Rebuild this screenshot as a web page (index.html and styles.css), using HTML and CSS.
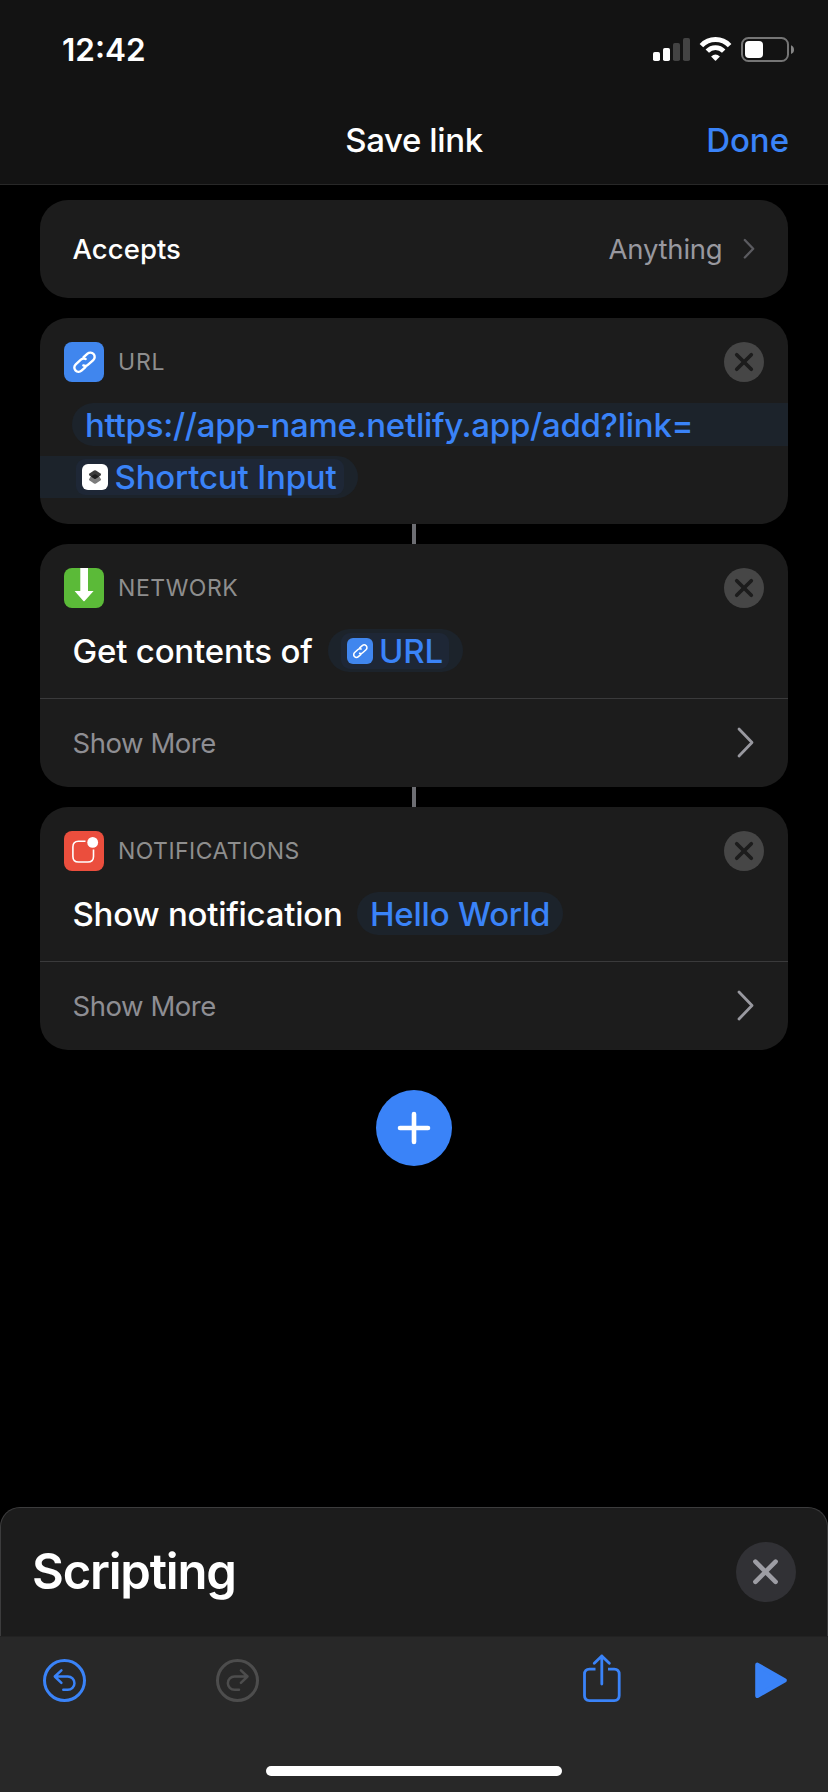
FILE: index.html
```
<!DOCTYPE html>
<html lang="en">
<head>
<meta charset="utf-8">
<title>Save link</title>
<link rel="stylesheet" href="styles.css">
</head>
<body>
<svg class="defs" aria-hidden="true">
  <symbol id="link" viewBox="0 0 40 40">
    <g transform="translate(20.5 20.2) rotate(-42)" fill="none" stroke="#fff" stroke-width="2.4" stroke-linecap="round">
      <path d="M2.6-4.3H7.9A4.3 4.3 0 0 1 7.9 4.3H1A4.3 4.3 0 0 1-3 1.6"/>
      <path d="M-2.6 4.3H-7.9A4.3 4.3 0 0 1-7.9-4.3H-1A4.3 4.3 0 0 1 3-1.6"/>
    </g>
  </symbol>
  <symbol id="remove" viewBox="0 0 40 40">
    <circle cx="20" cy="20" r="20" fill="#464646"/>
    <path d="M12.7 12.7 27.3 27.3M27.3 12.7 12.7 27.3" stroke="#1c1c1c" stroke-width="3.7" stroke-linecap="round"/>
  </symbol>
  <symbol id="chevron" viewBox="0 0 17 31">
    <path d="M2 2 15 15.5 2 29" fill="none" stroke="#98989f" stroke-width="2.8" stroke-linecap="round" stroke-linejoin="round"/>
  </symbol>
</svg>
<div class="screen">
  <header class="top">
    <div class="status">
      <span class="time">12:42</span>
      <svg class="status-icons" width="141" height="26" viewBox="0 0 141 26">
        <rect x="0" y="15" width="7" height="9" rx="1.8" fill="#fff"/>
        <rect x="10" y="11" width="7" height="13" rx="1.8" fill="#fff"/>
        <rect x="20" y="6" width="7" height="18" rx="1.8" fill="#434343"/>
        <rect x="30" y="1" width="7" height="23" rx="1.8" fill="#434343"/>
        <g transform="translate(46.5 0)">
          <path d="M1.9 8.6A19.4 19.4 0 0 1 30.1 8.6" fill="none" stroke="#fff" stroke-width="4.9"/>
          <path d="M7.8 14.2A11.3 11.3 0 0 1 24.2 14.2" fill="none" stroke="#fff" stroke-width="4.7"/>
          <path d="M11.6 19.4Q16 15.6 20.4 19.4L16.5 23.5Q16 24 15.5 23.5Z" fill="#fff"/>
        </g>
        <rect x="89" y="1" width="46" height="23" rx="6.5" fill="none" stroke="#757575" stroke-width="2"/>
        <rect x="92" y="4" width="18" height="17" rx="4" fill="#fff"/>
        <path d="M138 8.3Q141 9.5 141 12.7T138 17Z" fill="#858585"/>
      </svg>
    </div>
    <div class="nav">
      <span></span>
      <h1 class="title">Save link</h1>
      <span class="done">Done</span>
    </div>
  </header>

  <main class="flow">
    <section class="card accepts">
      <span class="accepts-label">Accepts</span>
      <span class="accepts-value">Anything</span>
      <svg class="accepts-chevron" width="12" height="22" viewBox="0 0 12 22"><path d="M1.8 2 10.2 10.8 1.8 19.5" fill="none" stroke="#5b5b60" stroke-width="2.3" stroke-linecap="round" stroke-linejoin="round"/></svg>
    </section>

    <section class="card url-card">
      <div class="card-head">
        <span class="app blue"><svg width="40" height="40"><use href="#link"/></svg></span>
        <span class="app-name url-name">URL</span>
        <svg width="40" height="40"><use href="#remove"/></svg>
      </div>
      <div class="url-line first"><span class="address">https://app-name.netlify.app/add?link=</span></div>
      <div class="url-line second">
        <span class="token shortcut">
          <svg width="26" height="26" viewBox="0 0 26 26">
            <rect width="26" height="26" rx="6" fill="#fff"/>
            <path d="M7 15.2Q6.6 16 7.6 16.5L12 19.5Q13 20.2 14 19.5L18.4 16.5Q19.4 16 19 15.2L17 12H9Z" fill="#7c7c7c"/>
            <path d="M7.5 9.6 12 6.6Q13 6 14 6.6L18.5 9.6Q19.8 10.6 18.5 11.6L14 14.6Q13 15.2 12 14.6L7.5 11.6Q6.2 10.6 7.5 9.6Z" fill="#3b3b3b"/>
            <path d="M9 12.6 12.2 10.6Q13 10.1 13.8 10.6L17 12.6 14 14.6Q13 15.2 12 14.6Z" fill="#1d1d1d"/>
          </svg>
          <span>Shortcut Input</span>
        </span>
      </div>
    </section>

    <div class="connector"></div>

    <section class="card action">
      <div class="card-head">
        <span class="app green"><svg width="40" height="40" viewBox="0 0 40 40"><path d="M16.3 0H24V23H29.6L20.6 32.9Q20 33.5 19.4 32.9L10.6 23H16.3Z" fill="#fff"/></svg></span>
        <span class="app-name">NETWORK</span>
        <svg width="40" height="40"><use href="#remove"/></svg>
      </div>
      <div class="sentence">
        <span class="phrase contents">Get contents of</span>
        <span class="pill url-pill"><span class="token url-token"><span class="mini blue"><svg width="26" height="26"><use href="#link"/></svg></span><span>URL</span></span></span>
      </div>
      <div class="more"><span>Show More</span><svg width="17" height="31"><use href="#chevron"/></svg></div>
    </section>

    <div class="connector"></div>

    <section class="card action">
      <div class="card-head">
        <span class="app red"><svg width="40" height="40" viewBox="0 0 40 40"><path d="M21.5 10.3H14.5Q8.9 10.3 8.9 16V25.4Q8.9 31 14.5 31H23.8Q29.5 31 29.5 25.4V18.5" fill="none" stroke="#fff" stroke-width="1.6"/><circle cx="28.7" cy="11.4" r="5.4" fill="#fff"/></svg></span>
        <span class="app-name notifications-name">NOTIFICATIONS</span>
        <svg width="40" height="40"><use href="#remove"/></svg>
      </div>
      <div class="sentence">
        <span class="phrase notification">Show notification</span>
        <span class="pill hello">Hello World</span>
      </div>
      <div class="more"><span>Show More</span><svg width="17" height="31"><use href="#chevron"/></svg></div>
    </section>

    <div class="add"><svg width="34" height="34" viewBox="0 0 34 34"><path d="M17 3V31M3 17H31" stroke="#fff" stroke-width="4.6" stroke-linecap="round"/></svg></div>
  </main>

  <section class="sheet">
    <h2 class="sheet-title">Scripting</h2>
    <svg width="60" height="60" viewBox="0 0 60 60"><circle cx="30" cy="30" r="30" fill="#313135"/><path d="M19.4 19.6 39.6 39.8M39.6 19.6 19.4 39.8" stroke="#9d9da4" stroke-width="4.6" stroke-linecap="round"/></svg>
  </section>

  <footer class="toolbar">
    <div class="tools">
      <svg class="undo" width="43" height="43" viewBox="0 0 43 43" fill="none" stroke="#3a83f8" stroke-linecap="round" stroke-linejoin="round"><circle cx="21.5" cy="21.5" r="20" stroke-width="3"/><path d="M18.4 11.4 11.8 17.5 18.4 23.8M12.2 17.5H24.8A6.6 6.6 0 0 1 24.8 30.8H20.3" stroke-width="2.5"/></svg>
      <svg class="redo" width="43" height="43" viewBox="0 0 43 43" fill="none" stroke="#4d4d4d" stroke-linecap="round" stroke-linejoin="round"><circle cx="21.5" cy="21.5" r="20" stroke-width="3"/><path d="M24.9 11.4 31.5 17.5 24.9 23.8M31.1 17.5H18.5A6.6 6.6 0 0 0 18.5 30.8H23" stroke-width="2.5"/></svg>
      <svg class="share" width="38" height="49" viewBox="0 0 38 49" fill="none" stroke="#3a83f8" stroke-width="2.8"><path d="M12.5 15.2H6.5Q1.5 15.2 1.5 20.2V41.6Q1.5 46.6 6.5 46.6H31.2Q36.2 46.6 36.2 41.6V20.2Q36.2 15.2 31.2 15.2H25"/><path d="M18.8 2V30M11.3 9.2 18.8 1.9 26.3 9.2" stroke-width="2.8" stroke-linecap="round" stroke-linejoin="round"/></svg>
      <svg class="play" width="32" height="37" viewBox="0 0 32 37"><path d="M2.4 2.8 29.6 18.3 2.4 33.8Z" fill="#3a83f8" stroke="#3a83f8" stroke-width="4.4" stroke-linejoin="round"/></svg>
    </div>
    <div class="home"></div>
  </footer>
</div>
</body>
</html>
```
FILE: styles.css
```
* { box-sizing: border-box; }

body {
  margin: 0;
  background: #000;
  color: #fff;
  font-family: Inter, "Liberation Sans", sans-serif;
}

svg { display: block; flex: none; }
.defs { display: none; }

.screen {
  width: 828px;
  height: 1792px;
  display: flex;
  flex-direction: column;
  white-space: nowrap;
}

/* Status bar and navigation bar */
.top {
  height: 185px;
  background: #131313;
  border-bottom: 1px solid #282828;
}

.status {
  height: 96px;
  padding: 3px 34px 0 62px;
  display: flex;
  align-items: center;
  justify-content: space-between;
}

.time { font-size: 31.5px; font-weight: 600; }

.nav {
  height: 88px;
  padding: 0 39px;
  display: grid;
  grid-template-columns: 1fr 140px 1fr;
  align-items: center;
}

.title {
  margin: 0;
  justify-self: center;
  font-size: 33px;
  font-weight: 550;
  letter-spacing: -0.38px;
}

.done {
  justify-self: end;
  color: #3a83f8;
  font-size: 33px;
  font-weight: 550;
  letter-spacing: -0.05px;
}

/* Shortcut flow */
.flow {
  flex: 1;
  padding: 15px 40px 0;
  display: flex;
  flex-direction: column;
  align-items: center;
}

.card {
  width: 748px;
  background: #1c1c1c;
  border-radius: 28px;
  overflow: hidden;
}

.accepts {
  height: 98px;
  margin-bottom: 20px;
  padding: 0 33px 0 32.5px;
  display: flex;
  align-items: center;
}

.accepts-label {
  flex: 1;
  font-size: 27.5px;
  font-weight: 550;
  letter-spacing: 0.05px;
}

.accepts-value {
  color: #98989f;
  font-size: 27.5px;
  letter-spacing: -0.22px;
}

.accepts-chevron { margin-left: 20.5px; }

.url-card { height: 206px; padding-top: 24px; }
.action { height: 243px; padding-top: 24px; }

.card-head {
  height: 40px;
  padding: 0 24px;
  display: flex;
  align-items: center;
}

.app {
  width: 40px;
  height: 40px;
  border-radius: 8px;
  overflow: hidden;
}

.blue { background: #4086ee; }
.green { background: #5bba38; }
.red { background: #eb4e3d; }

.app-name {
  flex: 1;
  margin-left: 14px;
  color: #8e8e8e;
  font-size: 23px;
  letter-spacing: 0.55px;
}

.url-name { letter-spacing: 0.8px; }
.notifications-name { letter-spacing: 0.44px; }

.url-line {
  display: flex;
  align-items: center;
  background: #1c232b;
  color: #3a83f8;
  font-size: 33px;
  font-weight: 500;
}

.first {
  height: 43px;
  margin: 21px 0 10px 32px;
  padding-left: 13px;
  border-radius: 21.5px 0 0 21.5px;
}

.address { letter-spacing: -0.28px; }

.second {
  width: 318px;
  height: 42px;
  padding-left: 36px;
  border-radius: 0 21px 21px 0;
}

.token {
  height: 36px;
  display: flex;
  align-items: center;
  background: #1e2736;
  border-radius: 9px;
}

.shortcut {
  width: 268px;
  padding-left: 6px;
  gap: 6.5px;
  letter-spacing: -0.18px;
}

.connector { width: 4px; height: 20px; background: #6d6e73; }

.sentence {
  height: 43px;
  margin-top: 21px;
  padding-left: 32.5px;
  display: flex;
  align-items: center;
  font-size: 33px;
  font-weight: 500;
}

.contents { width: 255.5px; letter-spacing: -0.2px; }
.notification { width: 284.5px; letter-spacing: -0.26px; }

.pill {
  height: 43px;
  display: flex;
  align-items: center;
  background: #1c232b;
  border-radius: 21.5px;
  color: #3a83f8;
}

.url-pill { width: 135px; padding-left: 13px; }

.url-token {
  width: 108px;
  padding-left: 6px;
  gap: 6px;
  letter-spacing: -0.2px;
}

.mini {
  width: 26px;
  height: 26px;
  border-radius: 6px;
}

.hello { width: 206px; padding-left: 13px; letter-spacing: -0.23px; }

.more {
  height: 89px;
  margin-top: 26px;
  padding: 0 34.5px 1px 32.5px;
  display: flex;
  align-items: center;
  justify-content: space-between;
  border-top: 1px solid #3a3a3b;
  color: #8e8e93;
  font-size: 27.5px;
  letter-spacing: -0.45px;
}

.add {
  width: 76px;
  height: 76px;
  margin-top: 40px;
  display: flex;
  align-items: center;
  justify-content: center;
  background: #3a83f8;
  border-radius: 50%;
}

/* Action category sheet */
.sheet {
  height: 129px;
  padding: 0 31px;
  display: flex;
  align-items: center;
  justify-content: space-between;
  background: #1c1c1c;
  border: 1px solid #3c3c3d;
  border-bottom: 0;
  border-radius: 20px 20px 0 0;
}

.sheet-title {
  margin: 0;
  padding-bottom: 2px;
  font-size: 49px;
  font-weight: 600;
  letter-spacing: -1.2px;
}

/* Bottom toolbar */
.toolbar {
  height: 156px;
  background: #282828;
  border-top: 1px solid #222;
}

.tools {
  height: 129px;
  padding: 0 41px 0 43px;
  display: flex;
  align-items: flex-start;
}

.undo { margin-top: 22px; }
.redo { margin: 22px 0 0 130px; }
.share { margin: 17px 0 0 324px; }
.play { margin: 25px 0 0 134px; }

.home {
  width: 296px;
  height: 10px;
  margin: 0 auto;
  background: #fff;
  border-radius: 5px;
}
```
